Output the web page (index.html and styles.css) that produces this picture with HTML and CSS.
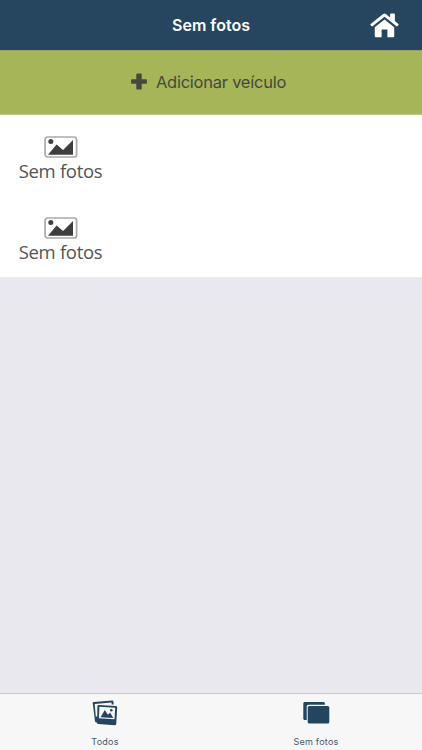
FILE: index.html
```html
<!DOCTYPE html>
<html lang="pt">
<head>
<meta charset="utf-8">
<title>Sem fotos</title>
<link rel="stylesheet" href="styles.css">
</head>
<body>
<div class="app">
  <header class="navbar">
    <h1 class="title">Sem fotos</h1>
    <a class="home" aria-label="Home">
      <svg width="29" height="25" viewBox="0 0 28 25" preserveAspectRatio="none">
        <path fill="#fff" d="M4.6 14.3 14 6.5l9.4 7.8V23c0 .8-.5 1.3-1.3 1.3h-5.3v-7.7h-5.6v7.7H5.9c-.8 0-1.3-.5-1.3-1.3z"/>
        <path fill="#fff" d="M12.7 1.1c.8-.7 1.8-.7 2.6 0l4.1 3.4V1.2c0-.4.3-.7.7-.7h3.2c.4 0 .7.3.7.7v6.9l3.4 2.9c.4.3.4.7.1 1l-.9 1.1c-.3.3-.7.4-1 .1L14 3.7 2.4 13.2c-.3.3-.7.2-1-.1L.5 12c-.3-.3-.3-.7.1-1z"/>
      </svg>
    </a>
  </header>
  <button class="add">
    <svg width="16" height="17" viewBox="0 0 16 17"><path fill="#46483f" d="M6.3.5h3.400c.6 0 1 .4 1 1v4.700h4.200c.6 0 1 .4 1 1v2.600c0 .6-.4 1-1 1h-4.200v4.700c0 .6-.4 1-1 1H6.300c-.6 0-1-.4-1-1v-4.700H1.100c-.6 0-1-.4-1-1V7.200c0-.6.4-1 1-1h4.200V1.500c0-.6.4-1 1-1z"/></svg>
    <span class="add-label">Adicionar veículo</span>
  </button>
  <main class="list">
    <div class="row">
      <div class="placeholder">
        <svg width="34" height="22" viewBox="0 0 34 22"><rect x="1.100" y="1" width="31.500" height="20" rx="2.500" fill="#fff" stroke="#aaa" stroke-width="1.700"/><circle cx="6.800" cy="5.500" r="2.500" fill="#3e3e3e"/><path fill="#3e3e3e" d="M4 18.700 12.600 8.500l6.400 5.600L29 4v14.700z"/></svg>
        <span>Sem fotos</span>
      </div>
    </div>
    <div class="row">
      <div class="placeholder">
        <svg width="34" height="22" viewBox="0 0 34 22"><rect x="1.100" y="1" width="31.500" height="20" rx="2.500" fill="#fff" stroke="#aaa" stroke-width="1.700"/><circle cx="6.800" cy="5.500" r="2.500" fill="#3e3e3e"/><path fill="#3e3e3e" d="M4 18.700 12.600 8.500l6.400 5.600L29 4v14.700z"/></svg>
        <span>Sem fotos</span>
      </div>
    </div>
  </main>
  <nav class="tabs">
    <a class="tab">
      <svg width="26" height="26" viewBox="0 0 26 26">
        <path fill="#24455f" d="M1.700 1.900 20.300.4c.6 0 1 .3 1.100.9l.3 3.300h-2l-.2-2L2.700 4l1.100 12.400 2.200.2v6.100l-1.800-.3c-.7-.1-1.100-.5-1.200-1.200L.7 3.100c-.1-.7.300-1.100 1-1.200z"/>
        <path fill="#24455f" d="M6.600 5 24 6c.8.1 1.300.6 1.200 1.300l-1 16.700c-.1.800-.6 1.200-1.300 1.200L6.200 24.100c-.7-.1-1.200-.5-1.100-1.300l.3-16.700C5.400 5.400 5.900 4.900 6.600 5z"/>
        <path fill="#f7f7f7" d="M7.400 6.800 23.200 7.700 22.500 19.300 6.900 18.300z"/>
        <path fill="#24455f" d="m8.600 17.200 4.200-7.300 3.100 4.900 2.200-2.200 3.200 5.300z"/>
        <circle cx="19.300" cy="10.200" r="1.300" fill="#24455f"/>
      </svg>
      <span>Todos</span>
    </a>
    <a class="tab">
      <svg width="28" height="26" viewBox="0 0 28 26">
        <path fill="#24455f" d="M2.800 2h18.600c.9 0 1.500.6 1.500 1.500v1.300H6.700c-1.300 0-2 .7-2 2v13.100H2.800c-.9 0-1.500-.6-1.500-1.500V3.500C1.300 2.600 1.900 2 2.800 2z"/>
        <rect x="5.700" y="5.900" width="21.600" height="17.600" rx="1.600" fill="#24455f"/>
      </svg>
      <span>Sem fotos</span>
    </a>
  </nav>
</div>
</body>
</html>
```
FILE: styles.css
```css
* { box-sizing: border-box; }
body { margin: 0; font-family: Inter, sans-serif; }
svg { display: block; flex: none; }
.app {
  height: 750px;
  display: flex;
  flex-direction: column;
  background: #e9e8ee;
}
.navbar {
  height: 50px;
  display: grid;
  grid-template-columns: 52px 1fr 52px;
  align-items: center;
  background: #26455f;
  color: #fff;
}
.title {
  grid-column: 2;
  margin: 0;
  text-align: center;
  font-size: 16px;
  line-height: 20px;
  font-weight: 600;
}
.add {
  height: 65px;
  border: 0;
  border-top: 1px solid #93a367;
  border-bottom: 1px solid #bdc88a;
  padding: 0 5px 2px 0;
  display: flex;
  align-items: center;
  justify-content: center;
  gap: 9px;
  background: #a6b558;
  color: #46483f;
  font-family: Inter, sans-serif;
}
.add-label {
  font-size: 16.500px;
  line-height: 20px;
  letter-spacing: -.24px;
}
.list { background: #fff; }
.row { height: 81px; padding: 21px 0 0 18px; }
.placeholder {
  width: 85px;
  display: flex;
  flex-direction: column;
  align-items: center;
  color: #555;
  font-family: "Open Sans", sans-serif;
  font-size: 18.500px;
  line-height: 25px;
  letter-spacing: -.3px;
  white-space: nowrap;
}
.tabs {
  height: 57px;
  margin-top: auto;
  display: grid;
  grid-template-columns: 1fr 1fr;
  border-top: 1px solid #cbcbd0;
  background: #f7f7f7;
}
.tab {
  display: flex;
  flex-direction: column;
  align-items: center;
  padding: 6px 1px 0 0;
  gap: 9px;
  color: #3e5a70;
  font-size: 9px;
  line-height: 14px;
  letter-spacing: .25px;
}
.tab svg { margin-right: 1px; }
```
